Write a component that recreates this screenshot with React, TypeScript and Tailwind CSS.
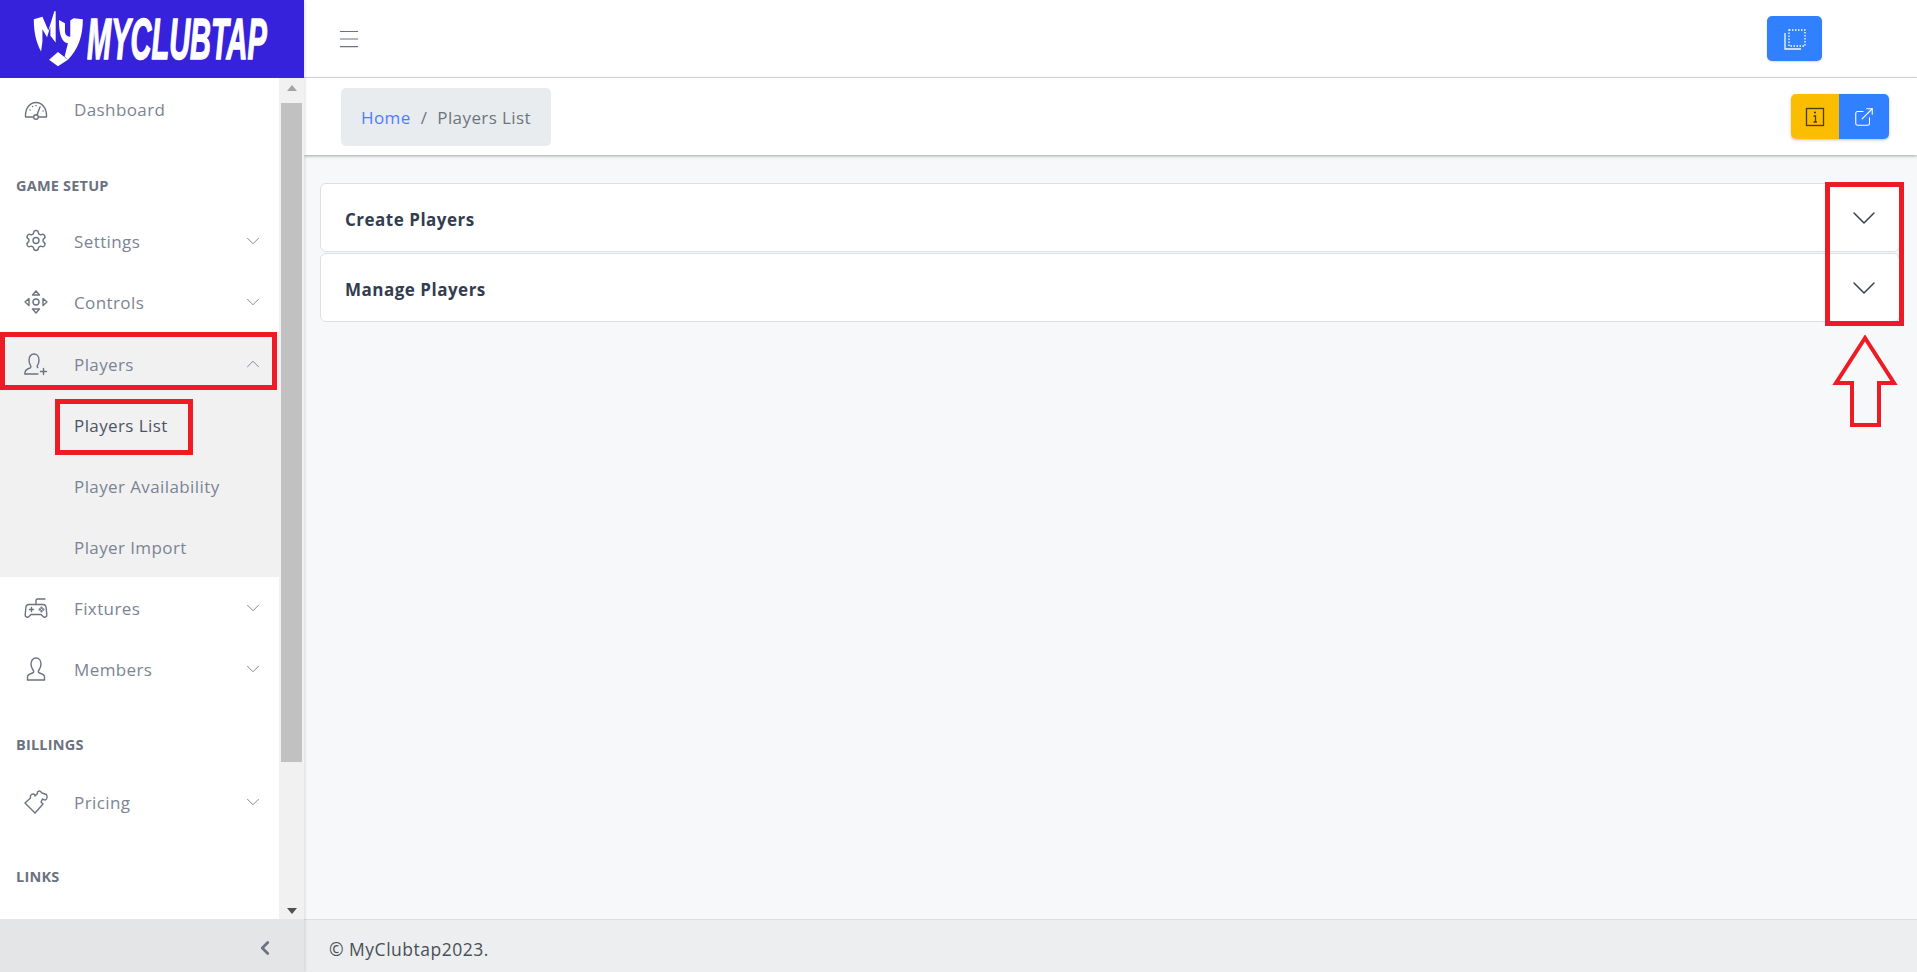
import React from "react";
import { ChevronDown, ChevronUp, ChevronLeft, ExternalLink, Settings, Menu } from "lucide-react";

const FONT = "font-['Open_Sans','Noto_Sans',sans-serif]";
const BODY = "text-[17px] tracking-[0.4px]";

function Icon({ children }: { children: React.ReactNode }) {
  return (
    <svg width="24" height="24" viewBox="0 0 24 24" fill="none" stroke="#6b7280" strokeWidth="1.400" strokeLinecap="round" strokeLinejoin="round">
      {children}
    </svg>
  );
}
function GaugeIcon() {
  return (
    <Icon>
      <path d="M9 20H1.500V18.500C1.500 11 6 5.500 12 5.500S22.500 11 22.500 18.500V20H15" />
      <circle cx="12" cy="20" r="2.300" />
      <path d="M13 18 16 10" />
      <path d="M6 13h.1M8.500 9.500h.1M12 8.500h.1M19 14h.1" />
    </Icon>
  );
}
function ControlsIcon() {
  return (
    <Icon>
      <circle cx="12" cy="12" r="3" />
      <path d="M8.500 5 12 1l3.500 4z" />
      <path d="M8.500 19 12 23l3.500-4z" />
      <path d="M5 8.500 1 12l4 3.500z" />
      <path d="M19 8.500 23 12l-4 3.500z" />
    </Icon>
  );
}
function PlayerAddIcon() {
  return (
    <Icon>
      <path d="M1 22v-1c0-3 2-4 5-5 1-.4 1.200-1.600.6-2.400C5.500 12 5 10.500 5 8c0-3.500 2-6 5-6s5 2.500 5 6c0 2.500-.5 4-1.600 5.600-.4.7-.3 1.600.4 2" />
      <path d="M1 22h13" />
      <path d="M19.500 16.500v6M16.500 19.500h6" />
    </Icon>
  );
}
function GamepadIcon() {
  return (
    <Icon>
      <path d="M12 8.500V4.500c0-1 .6-1.500 1.500-1.500H21" />
      <path d="M5 8.500h14c2 0 3 1.500 3.200 3.500l.6 7c.1 2-2.300 3-3.800 1.500L17 18.500H7L5 20.500C3.500 22 1.100 21 1.200 19l.6-7C2 10 3 8.500 5 8.500z" />
      <path d="M7.500 11.500v4M5.500 13.500h4" />
      <circle cx="17.500" cy="11.700" r=".5" />
      <circle cx="17.500" cy="15.300" r=".5" />
      <circle cx="15.700" cy="13.500" r=".5" />
      <circle cx="19.300" cy="13.500" r=".5" />
    </Icon>
  );
}
function MemberIcon() {
  return (
    <Icon>
      <path d="M3.500 23v-3c0-2 2-3 5-4 1.500-.5 1.500-1.500.5-3C8 11.500 7 9.500 7 7c0-3.500 2-6 5-6s5 2.500 5 6c0 2.500-1 4.500-2 6-1 1.500-1 2.500.5 3 3 1 5 2 5 4v3z" />
    </Icon>
  );
}
function PuzzleIcon() {
  return (
    <Icon>
      <path d="M1 13 6.500 8C6 6 7 4 9 4c1 0 2 1 2 2l2.500-2.500C13 1.500 15 .5 16.500 1.500L18 3l4.500 1.500c1 2 .5 4.500-1 5.500-1.500 0-2-.5-3-1L17 12l2 2-8 9z" />
    </Icon>
  );
}
function Row({ icon, label, chevron, tall }: { icon: React.ReactNode; label: string; chevron?: "down" | "up"; tall?: boolean }) {
  return (
    <div className={"flex items-center pl-6 pr-[15px] " + (tall ? "h-[62px]" : "h-[61px]")}>
      <span className="flex w-[24px] shrink-0 justify-center">{icon}</span>
      <span className={"ml-[26px] flex-1 pt-[2px] text-[#7b8494] " + BODY}>{label}</span>
      {chevron === "down" && <ChevronDown size={22} strokeWidth={0.9} className="text-[#6b7280]" />}
      {chevron === "up" && <ChevronUp size={22} strokeWidth={0.9} className="text-[#6b7280]" />}
    </div>
  );
}
function Sub({ label, active }: { label: string; active?: boolean }) {
  return (
    <div className={"flex h-[61px] items-center pl-[74px] pt-[2px] " + BODY + " " + (active ? "text-[#4b5563]" : "text-[#7b8494]")}>{label}</div>
  );
}
function Heading({ label, cls }: { label: string; cls: string }) {
  return <div className={"pl-4 text-[14.500px] font-bold tracking-[0.2px] text-[#6b7280] leading-[20px] " + cls}>{label}</div>;
}
function Accordion({ label }: { label: string }) {
  return (
    <div className="flex h-[69px] items-center justify-between rounded-[6px] border border-[#dcdfe3] bg-white pl-6 pr-[15px]">
      <span className="pt-[4px] text-[17px] font-bold tracking-[0.5px] text-[#333d4f]">{label}</span>
      <ChevronDown size={40} strokeWidth={0.9} className="text-[#374151]" />
    </div>
  );
}

export default function App() {
  return (
    <div className={"relative flex h-[972px] w-full overflow-hidden bg-[#f7f8fa] " + FONT}>
      <aside className="z-10 flex h-full w-[304px] shrink-0 flex-col shadow-[1px_0_3px_rgba(0,0,0,0.12)]">
        <div className="flex h-[78px] shrink-0 items-center gap-[4px] bg-[#3722dc] pl-[33px]">
          <svg className="shrink-0" width="50" height="58" viewBox="100 30 150 175" fill="white">
            <path d="M102 58 128 50 146 92 164 34 168 34V128L152 108V80L142 112 128 88V125L124 155C110 130 102 100 102 58z" />
            <path d="M178 60 196 70V95C196 105 205 112 212 110V62L222 55 250 58C250 110 235 150 205 180L195 170 205 130C190 128 178 112 178 60z" />
            <path d="M175 157 205 180 175 200 148 180z" />
          </svg>
          <div className="w-[181px] shrink-0">
            <span className="inline-block origin-left scale-x-[0.5] whitespace-nowrap text-[58px] font-black italic leading-none text-white font-['Liberation_Sans',sans-serif] [-webkit-text-stroke:1.500px_white]">MYCLUBTAP</span>
          </div>
        </div>
        <div className="flex min-h-0 flex-1 bg-white">
          <div className="min-w-0 flex-1 overflow-hidden">
            <Row icon={<GaugeIcon />} label="Dashboard" />
            <Heading label="GAME SETUP" cls="mt-[37px] mb-[14px]" />
            <Row icon={<Settings size={25} strokeWidth={1.400} className="text-[#6b7280]" />} label="Settings" chevron="down" />
            <Row icon={<ControlsIcon />} label="Controls" chevron="down" tall />
            <div className="bg-[#f1f1f2]">
              <Row icon={<PlayerAddIcon />} label="Players" chevron="up" />
              <Sub label="Players List" active />
              <Sub label="Player Availability" />
              <Sub label="Player Import" />
            </div>
            <Row icon={<GamepadIcon />} label="Fixtures" chevron="down" />
            <Row icon={<MemberIcon />} label="Members" chevron="down" />
            <Heading label="BILLINGS" cls="mt-[36px] mb-[16px]" />
            <Row icon={<PuzzleIcon />} label="Pricing" chevron="down" />
            <Heading label="LINKS" cls="mt-[35px]" />
          </div>
          <div className="flex w-[25px] shrink-0 flex-col items-center justify-between bg-[#f1f1f1] pb-[5px] pt-[7px]">
            <div className="flex h-[96px] w-full flex-col items-center">
              <div className="h-0 w-0 border-x-[5.500px] border-b-[6px] border-x-transparent border-b-[#a3a3a3]" />
              <div className="mt-[12px] h-[659px] w-[21px] shrink-0 bg-[#c1c1c1]" />
            </div>
            <div className="h-0 w-0 border-x-[5.500px] border-t-[6px] border-x-transparent border-t-[#505050]" />
          </div>
        </div>
        <div className="flex h-[53px] shrink-0 items-center justify-end bg-[#e4e5e7] pr-[28px] pt-[4px]">
          <ChevronLeft size={22} strokeWidth={3} className="text-[#6b7280]" />
        </div>
      </aside>

      <div className="flex min-w-0 flex-1 flex-col">
        <header className="flex h-[78px] shrink-0 items-center justify-between border-b border-[#dcdee1] bg-white pl-[32px] pr-[95px]">
          <Menu size={26} strokeWidth={1} className="text-[#6b7280]" />
          <button className="flex h-[45px] w-[55px] items-center justify-center rounded-[5px] bg-[#3080ff] shadow-[0_1px_2px_rgba(0,0,0,0.15)]">
            <svg width="24" height="24" viewBox="0 0 24 24" fill="none" stroke="white" strokeWidth="1.300">
              <rect x="6" y="3" width="16" height="16" strokeDasharray="1.500 1.500" />
              <path d="M2 6v16h16" strokeOpacity=".95" />
            </svg>
          </button>
        </header>
        <div className="flex h-[77px] shrink-0 items-center justify-between bg-white pl-[37px] pr-[28px] shadow-[0_1px_3px_rgba(0,0,0,0.35)]">
          <nav className={"flex h-[58px] w-[210px] items-center rounded-[5px] bg-[#e9ecef] pl-5 pt-[2px] " + BODY}>
            <span className="text-[#4c7dff]">Home</span>
            <span className="mx-[10px] text-[#6c757d]">/</span>
            <span className="text-[#6c757d]">Players List</span>
          </nav>
          <div className="flex h-[45px] overflow-hidden rounded-[5px] shadow-[0_1px_3px_rgba(0,0,0,0.25)]">
            <span className="flex w-[48px] items-center justify-center bg-[#fbbd00]">
              <svg width="20" height="20" viewBox="0 0 20 20" fill="none" stroke="#4b3c0a" strokeWidth="1.300">
                <rect x="1.500" y="1.500" width="17" height="17" />
                <path d="M9 5.500h2M8.500 9h2v6M8.500 15h3.500" />
              </svg>
            </span>
            <span className="flex w-[50px] items-center justify-center bg-[#3080ff]">
              <ExternalLink size={22} strokeWidth={1.200} className="text-white" />
            </span>
          </div>
        </div>
        <main className="flex min-h-0 flex-1 flex-col gap-px pl-4 pr-[17px] pt-[28px]">
          <Accordion label="Create Players" />
          <Accordion label="Manage Players" />
        </main>
        <footer className="flex h-[53px] shrink-0 items-center border-t border-[#dcdee1] bg-[#eceef0] pl-[25px] pt-[7px] text-[17.500px] tracking-[0.5px] text-[#495057]">
          © MyClubtap2023.
        </footer>
      </div>

      <div className="absolute left-0 top-[332px] z-20 h-[58px] w-[277px] border-[5px] border-[#ed1c24]" />
      <div className="absolute left-[55px] top-[399px] z-20 h-[56px] w-[138px] border-[5px] border-[#ed1c24]" />
      <div className="absolute left-[1825px] top-[182px] z-20 h-[144px] w-[79px] border-[5px] border-[#ed1c24]" />
      <svg className="absolute left-[1832px] top-[335px] z-20" width="66" height="96" viewBox="0 0 66 96" fill="none" stroke="#ed1c24" strokeWidth="4">
        <path d="M33 3 4 48H20V90H47V48H62z" />
      </svg>
    </div>
  );
}
